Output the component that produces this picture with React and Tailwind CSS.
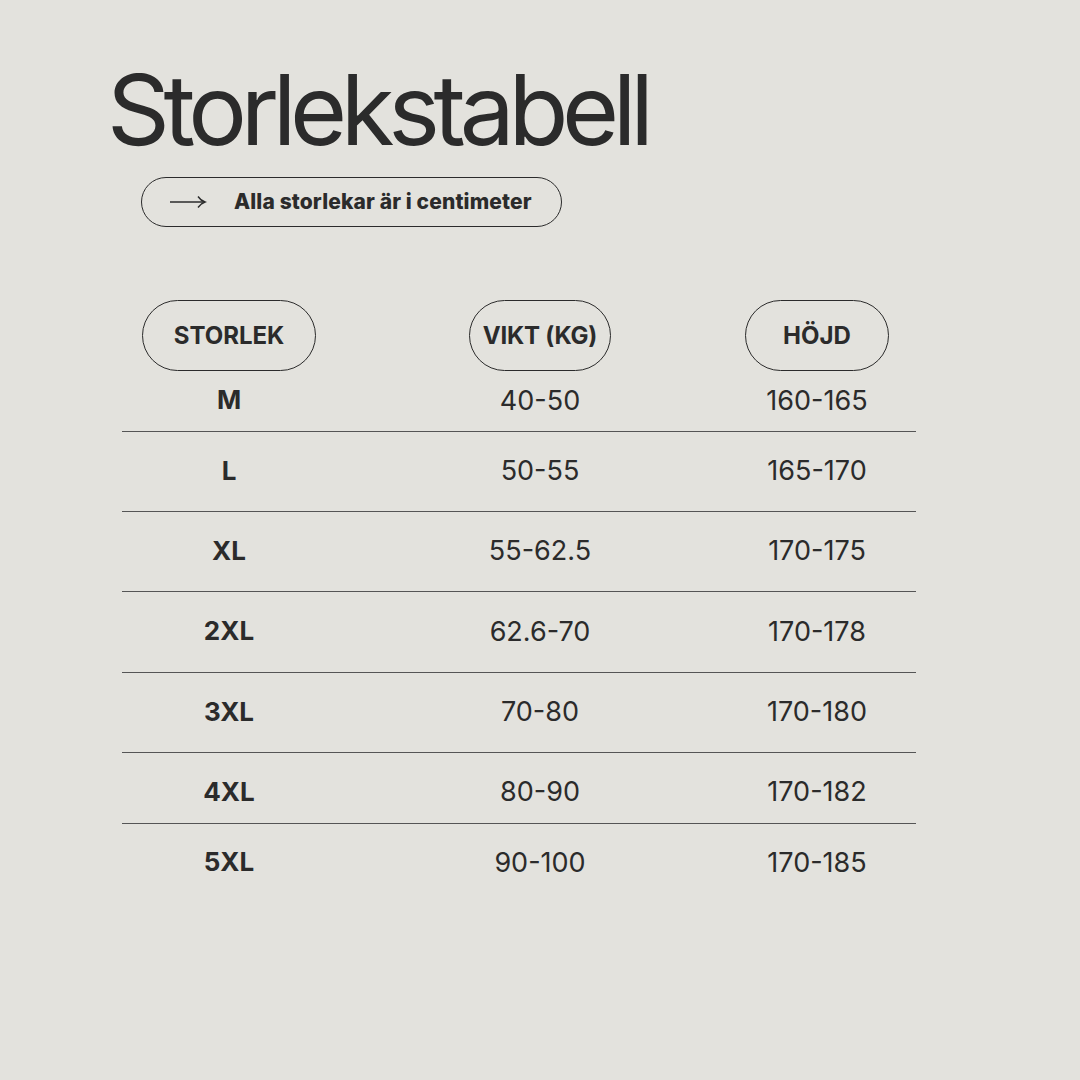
import React from "react";

const rows = [
  { s: "M", v: "40-50", h: "160-165", cls: "h-[61px]", line: true },
  { s: "L", v: "50-55", h: "165-170", cls: "h-[80px]", line: true },
  { s: "XL", v: "55-62.5", h: "170-175", cls: "h-[80px]", line: true },
  { s: "2XL", v: "62.6-70", h: "170-178", cls: "h-[81px]", line: true },
  { s: "3XL", v: "70-80", h: "170-180", cls: "h-[80px]", line: true },
  { s: "4XL", v: "80-90", h: "170-182", cls: "h-[71px] pt-[9px]", line: true },
  { s: "5XL", v: "90-100", h: "170-185", cls: "h-[78px]", line: false },
];

function Arrow() {
  return (
    <svg width="38" height="16" viewBox="0 0 38 16" fill="none">
      <path d="M1 8 H35" stroke="#2b2b2b" strokeWidth="1.4" />
      <path d="M29 2.5 C31 5.5 33 7 36 8 C33 9 31 10.5 29 13.5" stroke="#2b2b2b" strokeWidth="1.4" fill="none" />
    </svg>
  );
}

export default function App() {
  return (
    <div
      className="w-[1080px] h-[1080px] bg-[#e3e2dd] text-[#2b2b2b] overflow-hidden"
      style={{ fontFamily: "Inter, 'Noto Sans', sans-serif" }}
    >
      <div className="pt-[50px] pl-[107px]">
        <h1 className="text-[98px] leading-[120px] font-normal tracking-[-0.065em]">Storlekstabell</h1>
      </div>
      <div className="pl-[141px] mt-[7px]">
        <div className="w-[421px] h-[50px] rounded-full border-[1.5px] border-[#2b2b2b] flex items-center pl-[27px]">
          <Arrow />
          <span className="ml-[27px] text-[21px] font-extrabold tracking-[0.006em]">Alla storlekar är i centimeter</span>
        </div>
      </div>
      <div className="ml-[122px] mt-[73px] w-[794px]">
        <div className="grid grid-cols-[214px_408px_146px] h-[71px]">
          <div className="flex justify-center">
            <div className="w-[174px] h-[71px] rounded-[36px] border-[1.5px] border-[#2b2b2b] flex items-center justify-center text-[24px] font-bold">STORLEK</div>
          </div>
          <div className="flex justify-center">
            <div className="w-[142px] h-[71px] rounded-[36px] border-[1.5px] border-[#2b2b2b] flex items-center justify-center text-[24px] font-bold tracking-[-0.01em]">VIKT (KG)</div>
          </div>
          <div className="flex justify-center">
            <div className="w-[144px] h-[71px] rounded-[36px] border-[1.5px] border-[#2b2b2b] flex items-center justify-center text-[24px] font-bold">HÖJD</div>
          </div>
        </div>
        {rows.map((r) => (
          <div
            key={r.s}
            className={`grid grid-cols-[214px_408px_146px] items-center ${r.cls} ${r.line ? "border-b-[1.3px] border-[#555555]" : ""}`}
          >
            <div className="text-center text-[26px] font-bold pb-[3px]">{r.s}</div>
            <div className="text-center text-[27px] font-normal">{r.v}</div>
            <div className="text-center text-[27px] font-normal">{r.h}</div>
          </div>
        ))}
      </div>
    </div>
  );
}
